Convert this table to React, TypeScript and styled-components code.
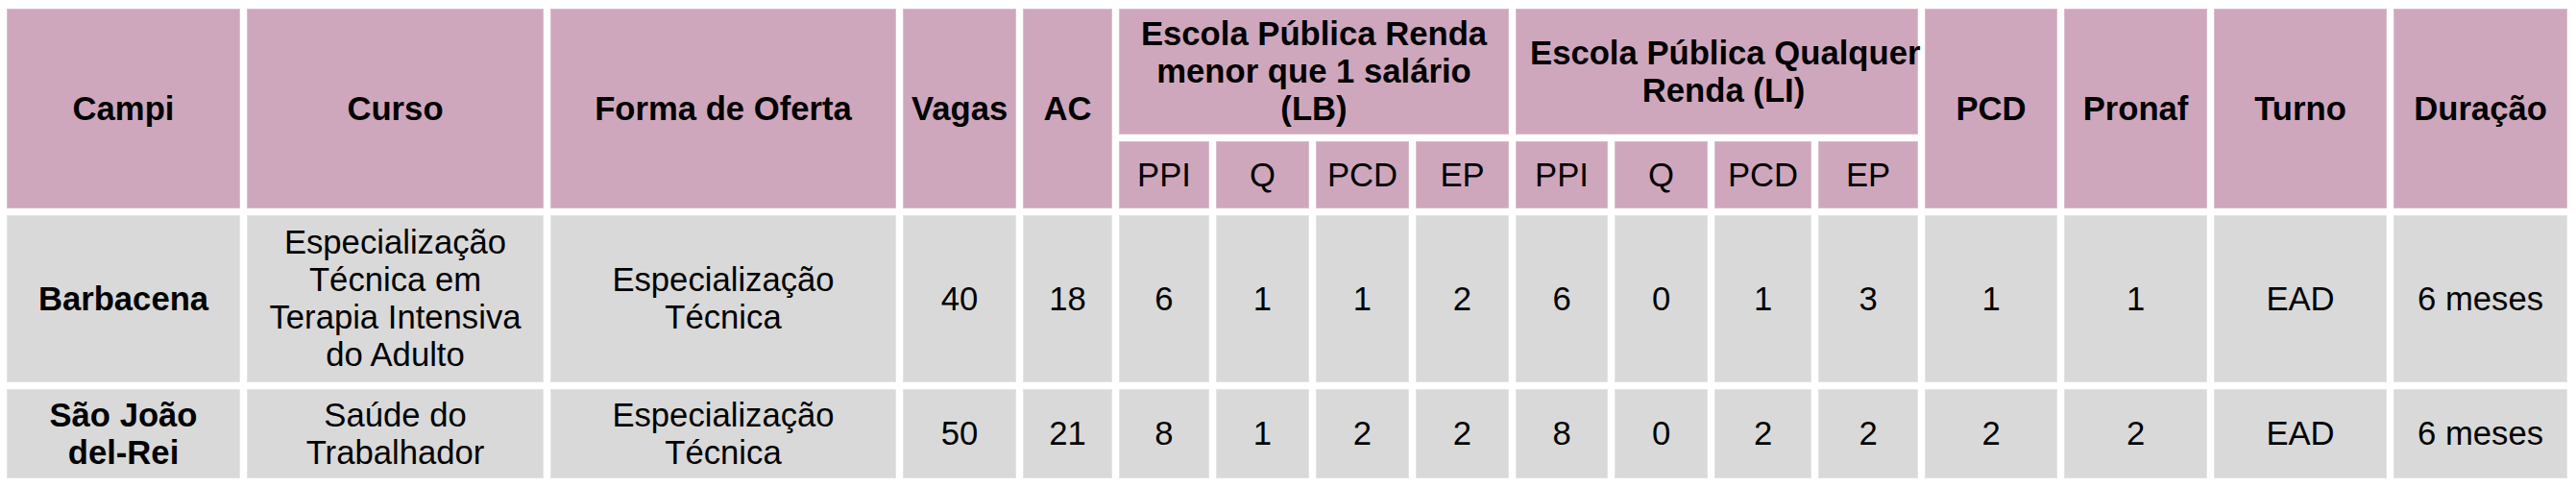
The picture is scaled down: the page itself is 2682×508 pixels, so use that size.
import * as React from 'react'
import styled, { createGlobalStyle } from 'styled-components'

const GlobalStyle = createGlobalStyle`
  html, body {
    margin: 0;
    padding: 0;
    background: #ffffff;
  }
  body {
    font-family: 'Liberation Sans', Arial, sans-serif;
    color: #000000;
  }
`

const Table = styled.table`
  margin-top: 2px;
  width: 2680px;
  table-layout: fixed;
  border-collapse: separate;
  border-spacing: 7px;
  font-size: 34.67px;
  line-height: normal;
`

const Col = styled.col<{ $w: number }>`
  width: ${(p) => p.$w}px;
`

const Row = styled.tr<{ $h: number }>`
  height: ${(p) => p.$h}px;
`

const Head = styled.th<{ $light?: boolean; $tight?: boolean }>`
  box-sizing: border-box;
  background: #cfa7bd;
  border: 1px solid #dbbccd;
  padding: ${(p) => (p.$tight ? '0 0 0 14px' : '0 8px')};
  white-space: ${(p) => (p.$tight ? 'nowrap' : 'normal')};
  text-align: center;
  vertical-align: middle;
  font-weight: ${(p) => (p.$light ? 400 : 700)};
`

const Cell = styled.td<{ $bold?: boolean }>`
  box-sizing: border-box;
  background: #d9d9d9;
  border: 1px solid #e4e4e4;
  padding: 0 8px;
  text-align: center;
  vertical-align: middle;
  font-weight: ${(p) => (p.$bold ? 700 : 400)};
`

const widths = [243, 309, 360, 118, 93, 94, 97, 97, 97, 96, 97, 101, 104, 138, 149, 180, 181]

const subCols = ['PPI', 'Q', 'PCD', 'EP']

type Campus = {
  campi: React.ReactNode
  curso: React.ReactNode
  vagas: number
  ac: number
  lb: number[]
  li: number[]
  pcd: number
  pronaf: number
  turno: string
  duracao: string
  height: number
}

const rows: Campus[] = [
  {
    campi: 'Barbacena',
    curso: 'Especialização Técnica em Terapia Intensiva do Adulto',
    vagas: 40,
    ac: 18,
    lb: [6, 1, 1, 2],
    li: [6, 0, 1, 3],
    pcd: 1,
    pronaf: 1,
    turno: 'EAD',
    duracao: '6 meses',
    height: 174,
  },
  {
    campi: 'São João del-Rei',
    curso: 'Saúde do Trabalhador',
    vagas: 50,
    ac: 21,
    lb: [8, 1, 2, 2],
    li: [8, 0, 2, 2],
    pcd: 2,
    pronaf: 2,
    turno: 'EAD',
    duracao: '6 meses',
    height: 93,
  },
]

const App = () => {
  return (
    <>
      <GlobalStyle />
      <Table>
        <colgroup>
          {widths.map((w, i) => (
            <Col key={i} $w={w} />
          ))}
        </colgroup>
        <thead>
          <Row $h={131}>
            <Head rowSpan={2}>Campi</Head>
            <Head rowSpan={2}>Curso</Head>
            <Head rowSpan={2}>Forma de Oferta</Head>
            <Head rowSpan={2}>Vagas</Head>
            <Head rowSpan={2}>AC</Head>
            <Head colSpan={4}>Escola Pública Renda menor que 1 salário (LB)</Head>
            <Head colSpan={4} $tight>
              Escola Pública Qualquer
              <br />
              Renda (LI)
            </Head>
            <Head rowSpan={2}>PCD</Head>
            <Head rowSpan={2}>Pronaf</Head>
            <Head rowSpan={2}>Turno</Head>
            <Head rowSpan={2}>Duração</Head>
          </Row>
          <Row $h={70}>
            {subCols.map((s) => (
              <Head key={'lb' + s} $light>
                {s}
              </Head>
            ))}
            {subCols.map((s) => (
              <Head key={'li' + s} $light>
                {s}
              </Head>
            ))}
          </Row>
        </thead>
        <tbody>
          {rows.map((r, i) => (
            <Row key={i} $h={r.height}>
              <Cell $bold>{r.campi}</Cell>
              <Cell>{r.curso}</Cell>
              <Cell>Especialização Técnica</Cell>
              <Cell>{r.vagas}</Cell>
              <Cell>{r.ac}</Cell>
              {r.lb.map((v, j) => (
                <Cell key={'lb' + j}>{v}</Cell>
              ))}
              {r.li.map((v, j) => (
                <Cell key={'li' + j}>{v}</Cell>
              ))}
              <Cell>{r.pcd}</Cell>
              <Cell>{r.pronaf}</Cell>
              <Cell>{r.turno}</Cell>
              <Cell>{r.duracao}</Cell>
            </Row>
          ))}
        </tbody>
      </Table>
    </>
  )
}

export default App
